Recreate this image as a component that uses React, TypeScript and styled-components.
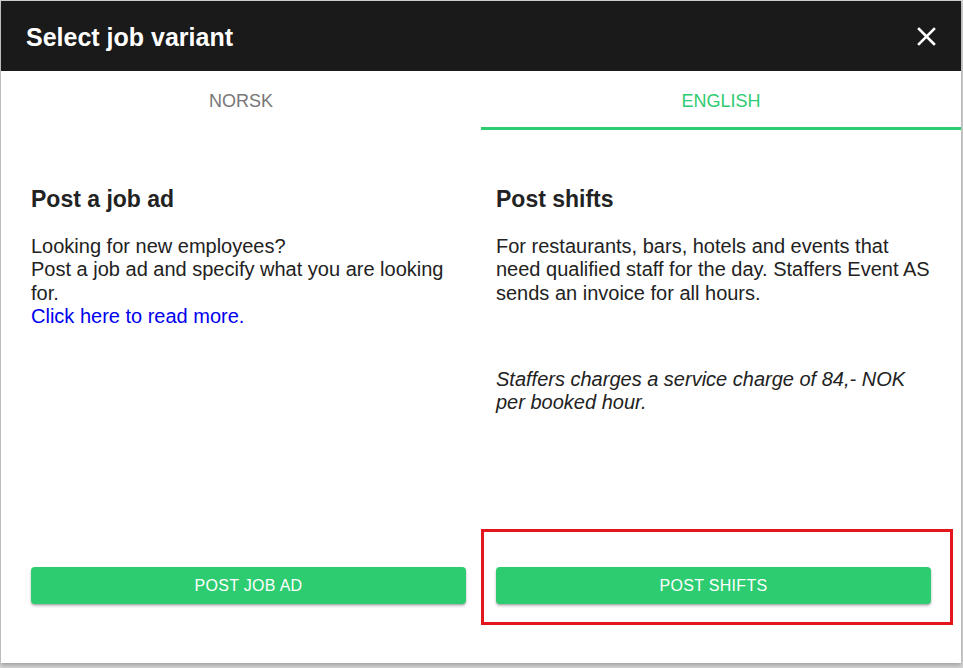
import styled, { createGlobalStyle } from 'styled-components';

const GlobalStyle = createGlobalStyle`
    html, body {
        margin: 0;
        padding: 0;
        background-color: #d3d3d3;
        font-family: 'Liberation Sans', Arial, sans-serif;
    }
    body {
        padding: 1px 0 0 1px;
        height: 668px;
        box-sizing: border-box;
        overflow: hidden;
    }
`;

const Dialog = styled.div`
    width: 960px;
    height: 662px;
    background-color: #fff;
    display: flex;
    flex-direction: column;
    box-shadow: 0 2px 4px rgba(0, 0, 0, 0.25);
`;

const Header = styled.header`
    height: 70px;
    flex-shrink: 0;
    background-color: #1a1a1a;
    display: flex;
    align-items: center;
    justify-content: space-between;
    padding: 0 25px 0 25px;
`;

const Title = styled.h2`
    margin: 0;
    color: #fff;
    font-size: 25px;
    font-weight: bold;
    padding-top: 2px;
`;

const CloseButton = styled.button`
    background: none;
    border: none;
    padding: 0;
    width: 20px;
    height: 20px;
    display: flex;
    align-items: center;
    justify-content: center;
    cursor: pointer;
`;

const Tabs = styled.div`
    display: grid;
    grid-template-columns: 1fr 1fr;
    height: 59px;
    flex-shrink: 0;
`;

const Tab = styled.div<{ $active?: boolean }>`
    display: flex;
    align-items: center;
    justify-content: center;
    font-size: 18px;
    text-transform: uppercase;
    color: ${(p) => (p.$active ? '#2ecc71' : '#777')};
    border-bottom: 3px solid ${(p) => (p.$active ? '#2ecc71' : 'transparent')};
    padding-top: 5px;
    cursor: pointer;
`;

const Body = styled.div`
    flex: 1;
    display: grid;
    grid-template-columns: 1fr 1fr;
    gap: 30px;
    padding: 0 30px 59px 30px;
`;

const Column = styled.div`
    display: flex;
    flex-direction: column;
    padding-top: 56px;
    color: #222;
`;

const Heading = styled.h3`
    margin: 0 0 23px;
    font-size: 23px;
    font-weight: bold;
    line-height: 26px;
`;

const Text = styled.p<{ $italic?: boolean }>`
    margin: ${(p) => (p.$italic ? '63px 0 0' : '0')};
    font-size: 20px;
    line-height: 23.3px;
    font-style: ${(p) => (p.$italic ? 'italic' : 'normal')};
`;

const Link = styled.a`
    color: #0000ee;
    text-decoration: none;
`;

const ButtonWrap = styled.div`
    margin-top: auto;
    position: relative;
`;

const Button = styled.button`
    width: 100%;
    height: 37px;
    border: none;
    border-radius: 4px;
    background-color: #2ecc71;
    color: #fff;
    font-family: 'Liberation Sans', Arial, sans-serif;
    font-size: 16px;
    letter-spacing: 0.3px;
    text-transform: uppercase;
    padding-top: 2px;
    box-shadow: 0 2px 3px rgba(0, 0, 0, 0.25), 0 1px 1px rgba(0, 0, 0, 0.12);
    cursor: pointer;
`;

const Highlight = styled.div`
    position: absolute;
    left: -15px;
    top: -38px;
    right: -22px;
    bottom: -21px;
    border: 3px solid #e3151d;
    pointer-events: none;
`;

const CloseIcon = () => (
    <svg width="19" height="19" viewBox="0 0 19 19">
        <path d="M2 2 L17 17 M17 2 L2 17" stroke="#fff" strokeWidth="2.6" strokeLinecap="square" />
    </svg>
);

const App = () => {
    return (
        <>
            <GlobalStyle />
            <Dialog>
                <Header>
                    <Title>Select job variant</Title>
                    <CloseButton aria-label="close">
                        <CloseIcon />
                    </CloseButton>
                </Header>
                <Tabs>
                    <Tab>Norsk</Tab>
                    <Tab $active>English</Tab>
                </Tabs>
                <Body>
                    <Column>
                        <Heading>Post a job ad</Heading>
                        <Text>
                            Looking for new employees?
                            <br />
                            Post a job ad and specify what you are looking for.
                            <br />
                            <Link href="#">Click here to read more.</Link>
                        </Text>
                        <ButtonWrap>
                            <Button>Post job ad</Button>
                        </ButtonWrap>
                    </Column>
                    <Column>
                        <Heading>Post shifts</Heading>
                        <Text>
                            For restaurants, bars, hotels and events that need qualified staff for the day. Staffers Event AS sends an invoice for all hours.
                        </Text>
                        <Text $italic>Staffers charges a service charge of 84,- NOK per booked hour.</Text>
                        <ButtonWrap>
                            <Button>Post shifts</Button>
                            <Highlight />
                        </ButtonWrap>
                    </Column>
                </Body>
            </Dialog>
        </>
    );
};

export default App;
